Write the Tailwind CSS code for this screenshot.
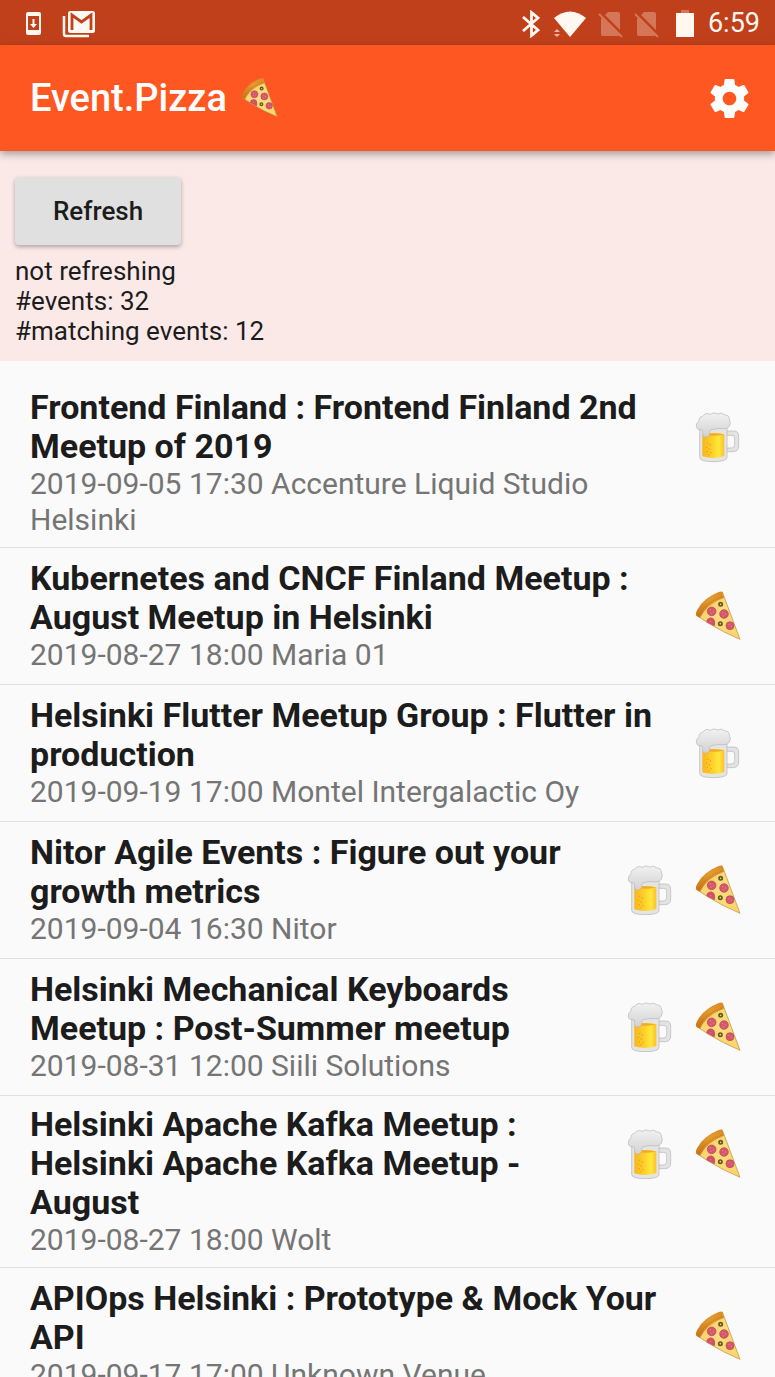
<!DOCTYPE html>
<html lang="en">
<head>
<meta charset="utf-8">
<meta name="viewport" content="width=device-width, initial-scale=1">
<title>Event.Pizza</title>
<script src="https://cdn.jsdelivr.net/npm/@tailwindcss/browser@4"></script>
</head>
<body class="bg-[#fafafa] font-[Roboto,sans-serif] text-[#1c1c1c]">
<svg width="0" height="0" class="absolute" aria-hidden="true">
  <defs>
    <linearGradient id="crust" x1="0" y1="1" x2="1" y2="0"><stop offset="0" stop-color="#c9741c"/><stop offset=".6" stop-color="#e39a2c"/><stop offset="1" stop-color="#d98a25"/></linearGradient>
    <linearGradient id="cheese" x1="0" y1="0" x2="1" y2="1"><stop offset="0" stop-color="#f5c65c"/><stop offset=".5" stop-color="#fbdc80"/><stop offset="1" stop-color="#fbd468"/></linearGradient>
    <linearGradient id="beer" x1="0" y1="0" x2="1" y2="0"><stop offset="0" stop-color="#f7b51c"/><stop offset=".45" stop-color="#fdd02c"/><stop offset=".75" stop-color="#ffe83a"/><stop offset="1" stop-color="#fbc02d"/></linearGradient>
    <linearGradient id="foam" x1="0" y1="0" x2="0" y2="1"><stop offset="0" stop-color="#f1f1f1"/><stop offset="1" stop-color="#d2d2d2"/></linearGradient>
    <symbol id="pizza" viewBox="22 31 144 156">
      <path d="M107 37 L160 179 Q110 158 64 130 L31 108 Q50 62 107 37Z" fill="url(#cheese)" stroke="#b98a35" stroke-width="2" stroke-linejoin="round"/>
      <path d="M107 37 L112 54 Q60 73 40 114 L30 109 Q24 104 32 90 Q50 55 96 37 Q104 34 107 37Z" fill="url(#crust)"/>
      <path d="M35 109 Q52 70 110 50" fill="none" stroke="#a9671c" stroke-width="2" opacity=".6"/>
      <path d="M59 127 A13 13 0 0 1 85 126 Q87 134 83 140Z" fill="#cf5265"/>
      <g fill="#d6576a" stroke="#b94457" stroke-width="2"><circle cx="75" cy="95" r="13"/><circle cx="112" cy="103" r="13"/><circle cx="130" cy="138" r="12"/></g>
      <g fill="#e5848b"><circle cx="71" cy="91" r="2"/><circle cx="80" cy="97" r="2"/><circle cx="73" cy="101" r="2"/><circle cx="108" cy="99" r="2"/><circle cx="117" cy="103" r="2"/><circle cx="110" cy="109" r="2"/><circle cx="127" cy="134" r="2"/><circle cx="134" cy="140" r="2"/><circle cx="72" cy="126" r="2"/></g>
      <g fill="#f8d576" stroke="#5f5a1f" stroke-width="5"><circle cx="102" cy="74" r="5"/><circle cx="101" cy="132" r="5"/></g>
    </symbol>
    <symbol id="mug" viewBox="26 31 144 156">
      <path d="M122 91 H145 Q160 91 160 106 V136 Q160 152 144 153 H122 V142 H138 Q148 142 148 132 V112 Q148 104 140 104 H122Z" fill="#e3e3e3" stroke="#b5b5b5" stroke-width="2"/>
      <path d="M43 78 H125 V170 Q125 183 84 183 Q43 183 43 170Z" fill="#e4e4e4" stroke="#b3b3b3" stroke-width="2"/>
      <path d="M51 101 Q84 93 117 101 V166 Q84 177 51 167Z" fill="url(#beer)"/>
      <path d="M52 101 Q84 94 116 101 Q84 110 52 101Z" fill="#f6a821"/>
      <g fill="#e39a16"><circle cx="67" cy="128" r="2"/><circle cx="75" cy="133" r="2"/><circle cx="64" cy="140" r="2"/><circle cx="72" cy="145" r="2"/><circle cx="66" cy="153" r="2"/><circle cx="77" cy="156" r="2"/><circle cx="71" cy="162" r="2"/></g>
      <path d="M49 87 Q31 89 33 73 Q34 65 41 62 Q39 49 52 47 Q60 34 75 41 Q84 33 98 40 Q109 33 119 43 Q131 42 132 55 Q138 66 132 77 Q126 85 115 84 Q97 82 77 87 Q72 90 73 101 Q70 111 59 109 Q50 108 52 97 Q52 90 49 87Z" fill="url(#foam)" stroke="#b6b6b6" stroke-width="2"/>
    </symbol>
    <symbol id="nosim" viewBox="0 0 26 28">
      <path d="M10 2H20Q22 2 22 4V24Q22 26 20 26H5Q3 26 3 24V9Z" fill="#d67659"/>
      <path d="M2 2L25 25" stroke="#bf401a" stroke-width="3"/>
      <path d="M1 4L24 27" stroke="#d67659" stroke-width="2"/>
    </symbol>
  </defs>
</svg>

<div class="flex h-screen flex-col overflow-hidden">
  <div class="flex h-[45px] shrink-0 items-center bg-[#bf401a] pt-[2px] pr-[15px] pl-[26px] text-[#fff8f0]">
    <svg class="h-[23px] w-[15px]" viewBox="0 0 15 23" fill="currentColor"><path fill-rule="evenodd" d="M2 0H13Q15 0 15 2V21Q15 23 13 23H2Q0 23 0 21V2Q0 0 2 0ZM2 4V18H13V4Z"/><path d="M6.500 7H8.500V12H11L7.500 16 4 12H6.500Z"/></svg>
    <svg class="ml-[21px] h-7 w-[33px]" viewBox="0 0 33 28" fill="none"><path d="M2 6V24Q2 26 4 26H27" stroke="currentColor" stroke-width="2.500"/><rect x="6" y="1" width="27" height="22" rx="2.500" fill="currentColor"/><path d="M10 20V5L19.500 12 29 5V20" stroke="#bf401a" stroke-width="2.800"/></svg>
    <div class="ml-auto flex items-center">
      <svg class="h-7 w-[18px]" viewBox="0 0 18 28" fill="none" stroke="currentColor" stroke-width="2.800"><path d="M1 7L16 20 9.500 25.500V2.500L16 8 1 21"/></svg>
      <svg class="ml-[13px] h-7 w-[33px]" viewBox="0 0 33 28" fill="currentColor"><path d="M1 8Q17-5 33 8L17 27Z"/><path d="M0 19H8V27H0Z" fill="#bf401a"/><path d="M1 22L4 19 7 22ZM1 24H7L4 27Z" fill="#eeb9a2"/></svg>
      <svg class="ml-3 h-7 w-[26px]"><use href="#nosim"/></svg>
      <svg class="ml-[10px] h-7 w-[26px]"><use href="#nosim"/></svg>
      <svg class="ml-4 h-7 w-[18px]" viewBox="0 0 18 28" fill="currentColor"><path d="M5 0H13V3H5Z" fill="#d67659"/><path d="M0 3H18V27H0Z"/></svg>
      <span class="ml-[14px] text-[27px] leading-none">6:59</span>
    </div>
  </div>

  <header class="z-10 flex h-[106px] shrink-0 items-center bg-[#ff5722] pr-[26px] pl-[30px] text-white shadow-[0_3px_8px_rgba(0,0,0,0.35)]">
    <h1 class="text-[38px] font-medium">Event.Pizza</h1>
    <svg class="ml-[13px] h-[42px] w-[39px]"><use href="#pizza"/></svg>
    <button type="button" aria-label="Settings" class="ml-auto">
      <svg class="size-[39px]" viewBox="2 2 20 20" fill="currentColor"><path d="M19.430 12.980c.04-.32.07-.64.07-.98s-.03-.66-.07-.98l2.110-1.650c.19-.15.24-.42.12-.64l-2-3.460c-.12-.22-.39-.3-.61-.22l-2.490 1c-.52-.4-1.080-.73-1.690-.98l-.38-2.650C14.460 2.180 14.250 2 14 2h-4c-.25 0-.46.18-.49.42l-.38 2.650c-.61.25-1.170.59-1.690.98l-2.490-1c-.23-.09-.49 0-.61.22l-2 3.460c-.13.22-.07.49.12.64l2.110 1.650c-.04.32-.07.65-.07.98s.03.66.07.98l-2.110 1.650c-.19.15-.24.42-.12.64l2 3.460c.12.22.39.3.61.22l2.490-1c.52.4 1.080.73 1.690.98l.38 2.650c.03.24.24.42.49.42h4c.25 0 .46-.18.49-.42l.38-2.650c.61-.25 1.170-.59 1.690-.98l2.490 1c.23.09.49 0 .61-.22l2-3.460c.12-.22.07-.49-.12-.64l-2.110-1.650zM12 15.500c-1.930 0-3.500-1.570-3.500-3.500s1.570-3.500 3.500-3.500 3.500 1.570 3.500 3.500-1.570 3.500-3.500 3.500z"/></svg>
    </button>
  </header>

  <section class="shrink-0 bg-[#fbe9e7] px-[15px] pt-[26px] pb-[15px] text-[26px] leading-[30px]">
    <button type="button" class="mb-[11px] block h-[68px] rounded-[4px] bg-[#e0e0e0] px-[38px] font-medium shadow-[0_2px_4px_rgba(0,0,0,0.3)]">Refresh</button>
    <p>not refreshing</p>
    <p>#events: 32</p>
    <p>#matching events: 12</p>
  </section>

  <ul class="min-h-0 flex-1 overflow-y-auto pt-[18px] [scrollbar-width:none]">
    <li class="flex min-h-[137px] items-start gap-6 border-b border-[#e0e0e0] py-[9px] pr-[33px] pl-[30px]">
      <div class="flex-1"><h2 class="text-[34px] leading-[39px] font-bold">Frontend Finland : Frontend Finland 2nd Meetup of 2019</h2><p class="text-[30px] leading-9 text-[#757575]">2019-09-05 17:30 Accenture Liquid Studio Helsinki</p></div>
      <div class="mt-[23px] flex gap-5"><svg class="h-[52px] w-12" role="img" aria-label="Beer"><use href="#mug"/></svg></div>
    </li>
    <li class="flex min-h-[137px] items-center gap-6 border-b border-[#e0e0e0] py-[9px] pr-[33px] pl-[30px]">
      <div class="flex-1"><h2 class="text-[34px] leading-[39px] font-bold">Kubernetes and CNCF Finland Meetup : August Meetup in Helsinki</h2><p class="text-[30px] leading-9 text-[#757575]">2019-08-27 18:00 Maria 01</p></div>
      <div class="flex gap-5"><svg class="h-[52px] w-12" role="img" aria-label="Pizza"><use href="#pizza"/></svg></div>
    </li>
    <li class="flex min-h-[137px] items-center gap-6 border-b border-[#e0e0e0] py-[9px] pr-[33px] pl-[30px]">
      <div class="flex-1"><h2 class="text-[34px] leading-[39px] font-bold">Helsinki Flutter Meetup Group : Flutter in production</h2><p class="text-[30px] leading-9 text-[#757575]">2019-09-19 17:00 Montel Intergalactic Oy</p></div>
      <div class="flex gap-5"><svg class="h-[52px] w-12" role="img" aria-label="Beer"><use href="#mug"/></svg></div>
    </li>
    <li class="flex min-h-[137px] items-center gap-6 border-b border-[#e0e0e0] py-[9px] pr-[33px] pl-[30px]">
      <div class="flex-1"><h2 class="text-[34px] leading-[39px] font-bold">Nitor Agile Events : Figure out your growth metrics</h2><p class="text-[30px] leading-9 text-[#757575]">2019-09-04 16:30 Nitor</p></div>
      <div class="flex gap-5"><svg class="h-[52px] w-12" role="img" aria-label="Beer"><use href="#mug"/></svg><svg class="h-[52px] w-12" role="img" aria-label="Pizza"><use href="#pizza"/></svg></div>
    </li>
    <li class="flex min-h-[137px] items-center gap-6 border-b border-[#e0e0e0] py-[9px] pr-[33px] pl-[30px]">
      <div class="flex-1"><h2 class="text-[34px] leading-[39px] font-bold">Helsinki Mechanical Keyboards Meetup : Post-Summer meetup</h2><p class="text-[30px] leading-9 text-[#757575]">2019-08-31 12:00 Siili Solutions</p></div>
      <div class="flex gap-5"><svg class="h-[52px] w-12" role="img" aria-label="Beer"><use href="#mug"/></svg><svg class="h-[52px] w-12" role="img" aria-label="Pizza"><use href="#pizza"/></svg></div>
    </li>
    <li class="flex min-h-[137px] items-start gap-6 border-b border-[#e0e0e0] py-[9px] pr-[33px] pl-[30px]">
      <div class="flex-1"><h2 class="text-[34px] leading-[39px] font-bold">Helsinki Apache Kafka Meetup : Helsinki Apache Kafka Meetup - August</h2><p class="text-[30px] leading-9 text-[#757575]">2019-08-27 18:00 Wolt</p></div>
      <div class="mt-[23px] flex gap-5"><svg class="h-[52px] w-12" role="img" aria-label="Beer"><use href="#mug"/></svg><svg class="h-[52px] w-12" role="img" aria-label="Pizza"><use href="#pizza"/></svg></div>
    </li>
    <li class="flex min-h-[137px] items-center gap-6 border-b border-[#e0e0e0] py-[9px] pr-[33px] pl-[30px]">
      <div class="flex-1"><h2 class="text-[34px] leading-[39px] font-bold">APIOps Helsinki : Prototype &amp; Mock Your API</h2><p class="text-[30px] leading-9 text-[#757575]">2019-09-17 17:00 Unknown Venue</p></div>
      <div class="flex gap-5"><svg class="h-[52px] w-12" role="img" aria-label="Pizza"><use href="#pizza"/></svg></div>
    </li>
  </ul>
</div>
</body>
</html>
